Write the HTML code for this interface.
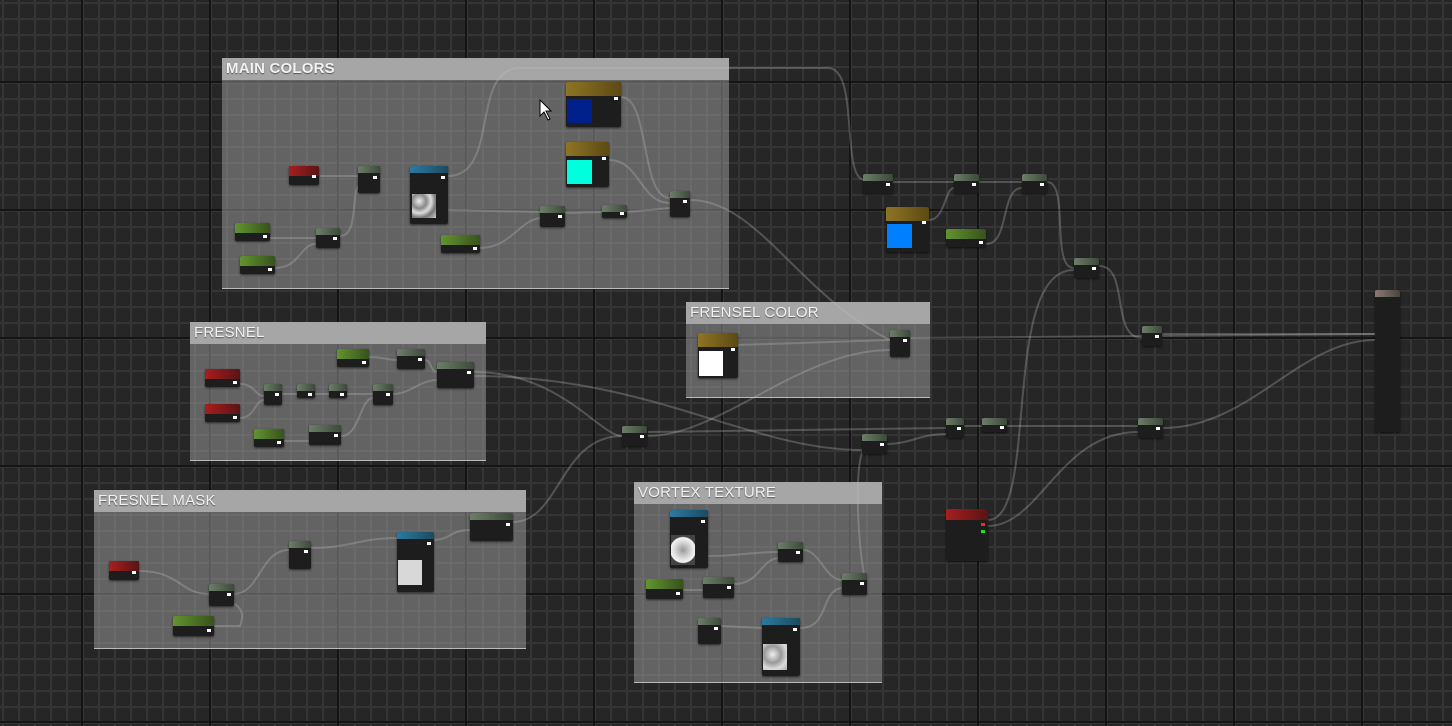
<!DOCTYPE html>
<html><head><meta charset="utf-8"><style>
*{margin:0;padding:0;box-sizing:border-box}
body{width:1452px;height:726px;overflow:hidden;position:relative;background-color:#262626;
background-image:
linear-gradient(to right,#141414 0,#141414 2px,transparent 2px),
linear-gradient(to bottom,#141414 0,#141414 2px,transparent 2px),
linear-gradient(to right,#353535 0,#353535 2px,transparent 2px),
linear-gradient(to bottom,#353535 0,#353535 2px,transparent 2px);
background-size:128px 128px,128px 128px,16px 16px,16px 16px;
background-position:81px 0,0 81px,2px 0,0 2px;
font-family:"Liberation Sans",sans-serif}
.c{position:absolute;background:rgba(160,160,160,0.5);border-bottom:1px solid #bbb}
.c .h{height:22px;background:#a6a6a6;color:#f2f2f2;font-size:15px;line-height:22px;padding-left:4px;text-shadow:0 1px 1px #555;letter-spacing:0.2px}
.n{position:absolute;background:#1c1d1c;border-radius:2px;box-shadow:0 1px 2px rgba(0,0,0,.6)}
.n .t{height:7px;background:linear-gradient(to right,#6c7e68,#3c4a3a);border-radius:2px 2px 0 0}
.n.g .t{height:10px;background:linear-gradient(to right,#62942e,#38521c)}
.n.r .t{height:10px;background:linear-gradient(to right,#a81e1e,#5a1414)}
.n.b .t{height:7px;background:linear-gradient(to right,#2c7aa0,#1c4a60)}
.n.y .t{height:14px;background:linear-gradient(to right,#8e7424,#5c4a14)}
.n .o{position:absolute;right:3px;width:4px;height:3px;background:#fff}
.sw{position:absolute}
svg{position:absolute;left:0;top:0}
</style></head><body>
<div class="c" style="left:222px;top:58px;width:507px;height:231px"><div class="h" style="font-weight:bold">MAIN COLORS</div></div>
<div class="c" style="left:190px;top:322px;width:296px;height:139px"><div class="h">FRESNEL</div></div>
<div class="c" style="left:686px;top:302px;width:244px;height:96px"><div class="h">FRENSEL COLOR</div></div>
<div class="c" style="left:94px;top:490px;width:432px;height:159px"><div class="h">FRESNEL MASK</div></div>
<div class="c" style="left:634px;top:482px;width:248px;height:201px"><div class="h">VORTEX TEXTURE</div></div>

<svg width="1452" height="726" fill="none" stroke="rgba(190,190,190,0.3)" stroke-width="2">
<path d="M448 176 C500 176 470 68 520 68 L828 68 C860 68 840 180 865 180"/>
<path d="M320 176 L358 176"/>
<path d="M270 238 L316 238"/>
<path d="M275 268 C300 268 300 244 316 244"/>
<path d="M340 236 C360 236 350 186 360 186"/>
<path d="M448 210 L540 212"/>
<path d="M480 248 C510 248 520 220 540 218"/>
<path d="M565 213 L602 212"/>
<path d="M627 212 L670 208"/>
<path d="M621 97 C650 97 640 198 670 198"/>
<path d="M609 160 C640 160 640 203 670 203"/>
<path d="M690 200 C760 200 800 300 900 345"/>
<path d="M893 182 L954 182"/>
<path d="M929 220 C945 220 945 188 954 188"/>
<path d="M979 182 L1022 182"/>
<path d="M986 244 C1010 244 1000 188 1022 188"/>
<path d="M1047 182 C1070 182 1050 268 1074 268"/>
<path d="M1099 266 C1130 266 1110 338 1142 338"/>
<path d="M910 338 L1375 334"/>
<path d="M1162 334 L1375 334"/>
<path d="M1163 428 C1250 428 1300 340 1375 340"/>
<path d="M988 520 C1040 520 1000 270 1074 270"/>
<path d="M988 526 C1040 526 1060 432 1138 432"/>
<path d="M738 345 L890 340"/>
<path d="M648 436 C720 436 800 350 890 350"/>
<path d="M474 372 C560 372 600 436 622 436"/>
<path d="M474 376 C650 376 750 450 862 450"/>
<path d="M513 522 C560 522 560 436 622 436"/>
<path d="M648 432 L946 428"/>
<path d="M887 444 C910 444 920 434 946 434"/>
<path d="M964 426 L982 426"/>
<path d="M1007 426 L1138 426"/>
<path d="M868 444 C850 450 860 570 866 580"/>
<path d="M240 384 C255 384 255 396 264 396"/>
<path d="M240 418 C255 418 255 400 264 400"/>
<path d="M282 394 L297 394 M315 394 L329 394 M347 394 L373 394"/>
<path d="M369 357 C385 357 385 360 397 360"/>
<path d="M425 360 C432 360 430 372 437 372"/>
<path d="M393 394 C410 394 420 380 437 380"/>
<path d="M284 441 L309 441"/>
<path d="M341 436 C360 436 360 398 373 398"/>
<path d="M139 571 C180 571 180 594 209 594"/>
<path d="M234 594 C260 594 260 550 289 550"/>
<path d="M311 548 C350 548 360 538 397 538"/>
<path d="M214 626 L240 626 C250 600 220 600 215 600"/>
<path d="M434 540 C450 540 450 530 470 530"/>
<path d="M708 556 C740 556 750 552 778 552"/>
<path d="M803 550 C820 550 825 580 842 580"/>
<path d="M683 590 L703 590"/>
<path d="M734 584 C760 584 760 560 778 558"/>
<path d="M721 626 L762 628"/>
<path d="M800 628 C830 628 820 590 842 588"/>
</svg>

<div class="n r" style="left:289px;top:166px;width:30px;height:19px"><div class="t"></div><div class="o" style="top:9px"></div></div>
<div class="n" style="left:358px;top:166px;width:22px;height:27px"><div class="t"></div><div class="o" style="top:10px"></div></div>
<div class="n b" style="left:410px;top:166px;width:38px;height:58px"><div class="t"></div><div class="o" style="top:10px"></div><div class="sw" style="left:2px;top:28px;width:24px;height:24px;background:radial-gradient(circle at 30% 30%,#eee,#888 30%,#ddd 50%,#777 70%,#ccc)"></div></div>
<div class="n g" style="left:235px;top:223px;width:35px;height:18px"><div class="t"></div><div class="o" style="top:12px"></div></div>
<div class="n g" style="left:240px;top:256px;width:35px;height:18px"><div class="t"></div><div class="o" style="top:12px"></div></div>
<div class="n" style="left:316px;top:228px;width:24px;height:20px"><div class="t"></div><div class="o" style="top:9px"></div></div>
<div class="n y" style="left:566px;top:82px;width:55px;height:45px"><div class="t"></div><div class="o" style="top:15px"></div><div class="sw" style="left:1px;top:17px;width:25px;height:24px;background:#00208a"></div></div>
<div class="n y" style="left:566px;top:142px;width:43px;height:45px"><div class="t"></div><div class="o" style="top:15px"></div><div class="sw" style="left:1px;top:18px;width:25px;height:24px;background:#00ffdd"></div></div>
<div class="n g" style="left:441px;top:235px;width:39px;height:18px"><div class="t"></div><div class="o" style="top:12px"></div></div>
<div class="n" style="left:540px;top:206px;width:25px;height:21px"><div class="t"></div><div class="o" style="top:9px"></div></div>
<div class="n" style="left:602px;top:205px;width:25px;height:13px"><div class="t"></div><div class="o" style="top:7px"></div></div>
<div class="n" style="left:670px;top:191px;width:20px;height:26px"><div class="t"></div><div class="o" style="top:9px"></div></div>
<div class="n" style="left:863px;top:174px;width:30px;height:20px"><div class="t"></div><div class="o" style="top:9px"></div></div>
<div class="n" style="left:954px;top:174px;width:25px;height:20px"><div class="t"></div><div class="o" style="top:9px"></div></div>
<div class="n" style="left:1022px;top:174px;width:25px;height:20px"><div class="t"></div><div class="o" style="top:9px"></div></div>
<div class="n y" style="left:886px;top:207px;width:43px;height:45px"><div class="t"></div><div class="o" style="top:14px"></div><div class="sw" style="left:1px;top:17px;width:25px;height:24px;background:#0080ff"></div></div>
<div class="n g" style="left:946px;top:229px;width:40px;height:18px"><div class="t"></div><div class="o" style="top:12px"></div></div>
<div class="n" style="left:1074px;top:258px;width:25px;height:20px"><div class="t"></div><div class="o" style="top:9px"></div></div>
<div class="n" style="left:1142px;top:326px;width:20px;height:20px"><div class="t"></div><div class="o" style="top:9px"></div></div>
<div class="n" style="left:1375px;top:290px;width:25px;height:142px"><div class="t" style="background:linear-gradient(to right,#8a7a70,#4a4440)"></div></div>
<div class="n y" style="left:698px;top:333px;width:40px;height:45px"><div class="t"></div><div class="o" style="top:15px"></div><div class="sw" style="left:1px;top:18px;width:24px;height:25px;background:#fff"></div></div>
<div class="n" style="left:890px;top:330px;width:20px;height:27px"><div class="t"></div><div class="o" style="top:9px"></div></div>
<div class="n r" style="left:205px;top:369px;width:35px;height:18px"><div class="t"></div><div class="o" style="top:12px"></div></div>
<div class="n r" style="left:205px;top:404px;width:35px;height:18px"><div class="t"></div><div class="o" style="top:12px"></div></div>
<div class="n" style="left:264px;top:384px;width:18px;height:21px"><div class="t"></div><div class="o" style="top:9px"></div></div>
<div class="n" style="left:297px;top:384px;width:18px;height:14px"><div class="t"></div><div class="o" style="top:9px"></div></div>
<div class="n" style="left:329px;top:384px;width:18px;height:14px"><div class="t"></div><div class="o" style="top:9px"></div></div>
<div class="n" style="left:373px;top:384px;width:20px;height:21px"><div class="t"></div><div class="o" style="top:9px"></div></div>
<div class="n g" style="left:337px;top:349px;width:32px;height:18px"><div class="t"></div><div class="o" style="top:12px"></div></div>
<div class="n" style="left:397px;top:349px;width:28px;height:20px"><div class="t"></div><div class="o" style="top:9px"></div></div>
<div class="n" style="left:437px;top:362px;width:37px;height:26px"><div class="t"></div><div class="o" style="top:9px"></div></div>
<div class="n g" style="left:254px;top:429px;width:30px;height:18px"><div class="t"></div><div class="o" style="top:12px"></div></div>
<div class="n" style="left:309px;top:425px;width:32px;height:20px"><div class="t"></div><div class="o" style="top:9px"></div></div>
<div class="n" style="left:622px;top:426px;width:25px;height:20px"><div class="t"></div><div class="o" style="top:9px"></div></div>
<div class="n" style="left:862px;top:434px;width:25px;height:20px"><div class="t"></div><div class="o" style="top:9px"></div></div>
<div class="n" style="left:946px;top:418px;width:18px;height:20px"><div class="t"></div><div class="o" style="top:9px"></div></div>
<div class="n" style="left:982px;top:418px;width:25px;height:14px"><div class="t"></div><div class="o" style="top:8px"></div></div>
<div class="n" style="left:1138px;top:418px;width:25px;height:20px"><div class="t"></div><div class="o" style="top:9px"></div></div>
<div class="n r" style="left:946px;top:509px;width:42px;height:52px"><div class="t" style="height:11px"></div><div class="o" style="top:14px;background:#f22"></div><div class="o" style="top:21px;background:#2d2"></div></div>
<div class="n r" style="left:109px;top:561px;width:30px;height:19px"><div class="t"></div><div class="o" style="top:10px"></div></div>
<div class="n" style="left:209px;top:584px;width:25px;height:22px"><div class="t"></div><div class="o" style="top:9px"></div></div>
<div class="n" style="left:289px;top:541px;width:22px;height:28px"><div class="t"></div><div class="o" style="top:9px"></div></div>
<div class="n b" style="left:397px;top:532px;width:37px;height:60px"><div class="t"></div><div class="o" style="top:10px"></div><div class="sw" style="left:1px;top:28px;width:24px;height:25px;background:#d8d8d8"></div></div>
<div class="n g" style="left:173px;top:616px;width:41px;height:20px"><div class="t"></div><div class="o" style="top:13px"></div></div>
<div class="n" style="left:470px;top:513px;width:43px;height:28px"><div class="t"></div><div class="o" style="top:10px"></div></div>
<div class="n b" style="left:670px;top:510px;width:38px;height:58px"><div class="t"></div><div class="o" style="top:10px"></div><div class="sw" style="left:1px;top:25px;width:24px;height:30px;background:radial-gradient(circle,#999 0,#ddd 45%,#f4f4f4 65%,#444 70%)"></div></div>
<div class="n g" style="left:646px;top:579px;width:37px;height:20px"><div class="t"></div><div class="o" style="top:13px"></div></div>
<div class="n" style="left:703px;top:577px;width:31px;height:21px"><div class="t"></div><div class="o" style="top:9px"></div></div>
<div class="n" style="left:778px;top:542px;width:25px;height:20px"><div class="t"></div><div class="o" style="top:9px"></div></div>
<div class="n" style="left:842px;top:573px;width:25px;height:22px"><div class="t"></div><div class="o" style="top:9px"></div></div>
<div class="n" style="left:698px;top:618px;width:23px;height:26px"><div class="t"></div><div class="o" style="top:9px"></div></div>
<div class="n b" style="left:762px;top:618px;width:38px;height:58px"><div class="t"></div><div class="o" style="top:10px"></div><div class="sw" style="left:1px;top:26px;width:24px;height:26px;background:radial-gradient(circle at 40% 40%,#eee,#999 40%,#ddd 70%,#aaa)"></div></div>
<svg width="1452" height="726"><path d="M540 100 L540 116 L544 112 L548 120 L550 119 L546 111 L551 111 Z" fill="#fff" stroke="#000" stroke-width="1"/></svg>
</body></html>
